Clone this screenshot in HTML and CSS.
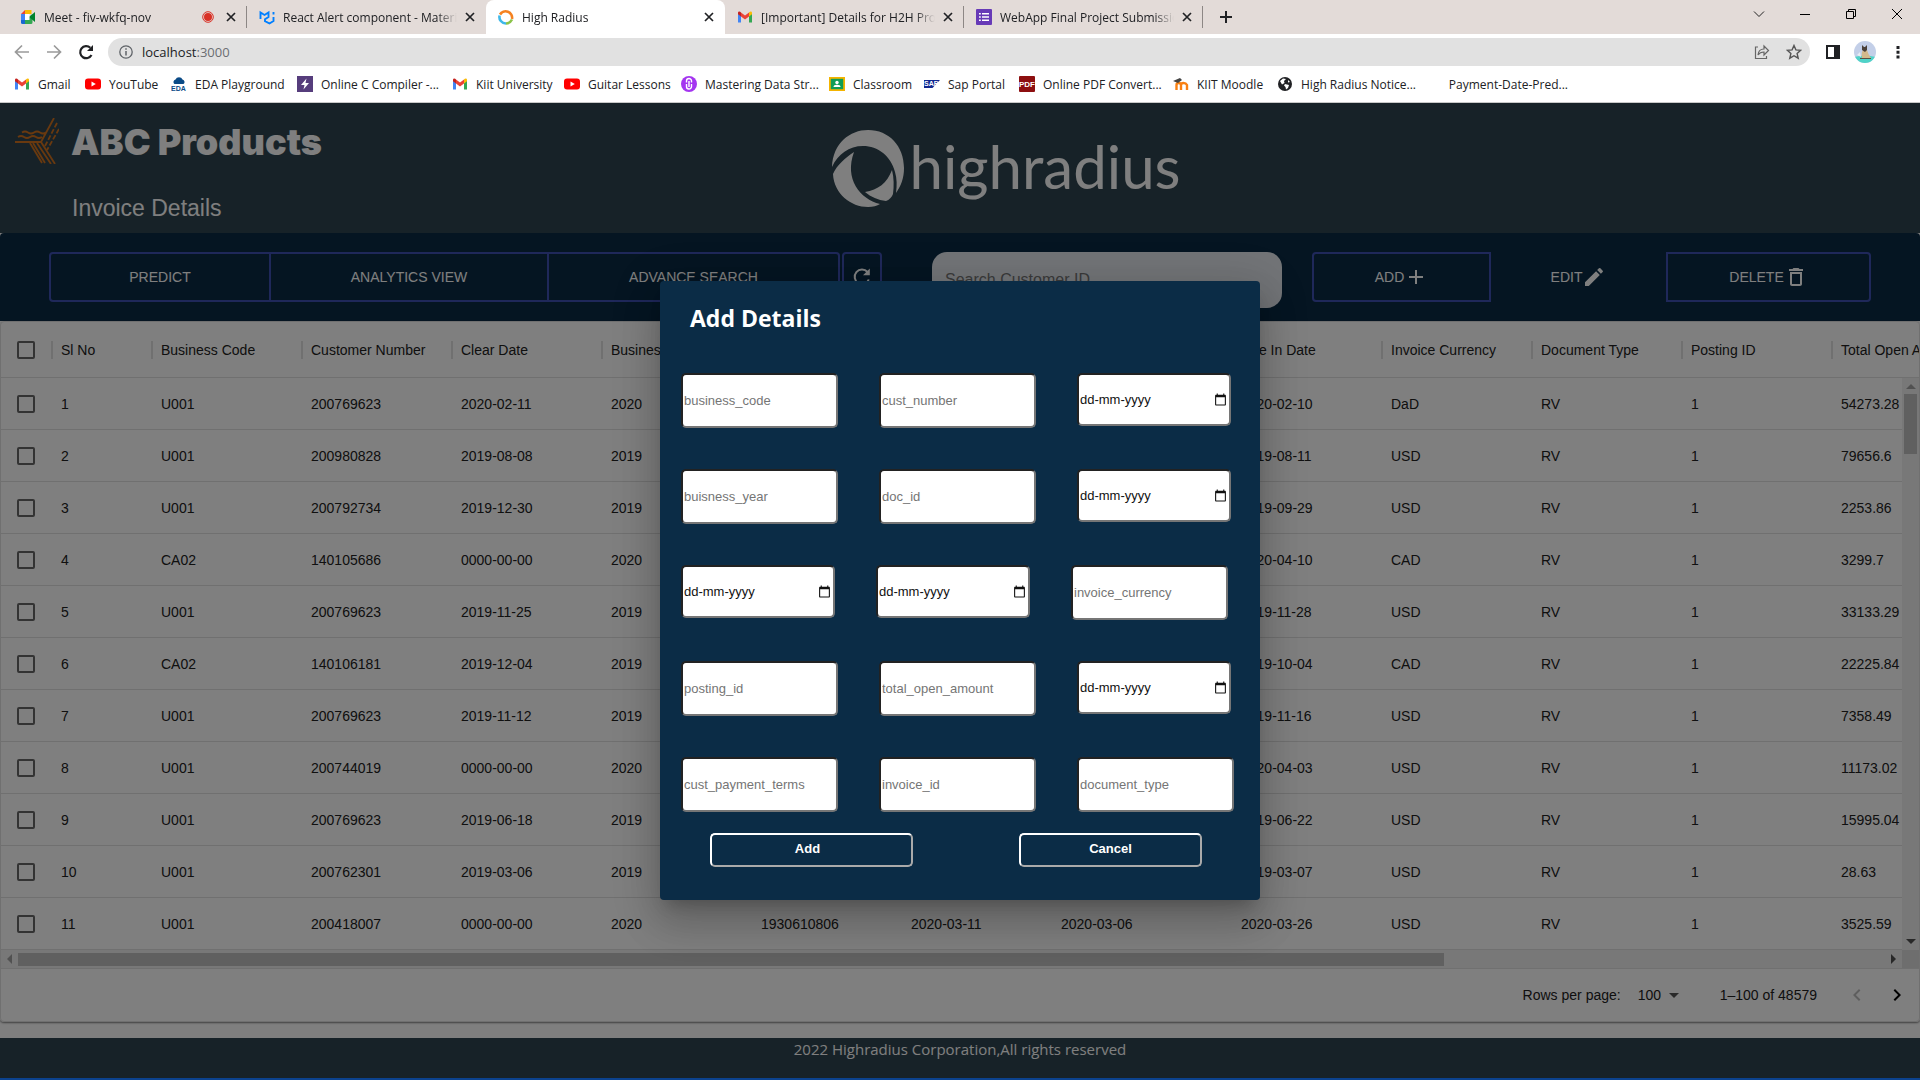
FILE: index.html
```html
<!DOCTYPE html>
<html lang="en">
<head>
<meta charset="utf-8">
<title>High Radius</title>
<link rel="stylesheet" href="styles.css">
</head>
<body>
<svg class="defs" width="0" height="0" aria-hidden="true">
  <symbol id="i-x" viewBox="0 0 10 10"><path d="M1 1l8 8M9 1l-8 8" stroke="currentColor" stroke-width="1.7" fill="none"/></symbol>
  <symbol id="i-gmail" viewBox="0 0 16 16"><path d="M1 4v9.5h3V7z" fill="#4285f4"/><path d="M15 4v9.5h-3V7z" fill="#34a853"/><path d="M4 7.500V3.500L8 6.500l4-3v4L8 10.500z" fill="#ea4335"/><path d="M1 4c0-2 2-2 3-.5v4L1 5.300z" fill="#c5221f"/><path d="M15 4c0-2-2-2-3-.5v4l3-2.200z" fill="#fbbc04"/></symbol>
  <symbol id="i-youtube" viewBox="0 0 16 16"><rect y="2.500" width="16" height="11" rx="3" fill="#f00"/><path d="M6.500 5.500v5L10.800 8z" fill="#fff"/></symbol>
  <symbol id="i-cal" viewBox="0 0 24 24"><path fill="currentColor" d="M20 3h-1V1h-2v2H7V1H5v2H4c-1.100 0-2 .9-2 2v16c0 1.100.9 2 2 2h16c1.100 0 2-.9 2-2V5c0-1.100-.9-2-2-2zm0 18H4V8h16v13z"/></symbol>
</svg>

<div class="browser">
  <div class="tabs">
    <div class="tab tab-line">
      <svg width="16" height="16" viewBox="0 0 16 16"><path d="M1 5l4-4v4z" fill="#ea4335"/><path d="M5 1h6.500v4H5z" fill="#fbbc04"/><path d="M1 5h4v6H1z" fill="#4285f4"/><path d="M1 11h4v4H2.500Q1 15 1 13.500z" fill="#1967d2"/><path d="M5 11h4V8l3.500-3v8.500q0 1.500-1.500 1.500H5z" fill="#34a853"/><path d="M9 8l6-5v10z" fill="#00832d"/><path d="M5 5h4.500v6H5z" fill="#fff"/></svg>
      <span class="tab-title">Meet - fiv-wkfq-nov</span>
      <svg class="rec" width="12" height="12" viewBox="0 0 12 12"><circle cx="6" cy="6" r="5.300" fill="none" stroke="#d93025"/><circle cx="6" cy="6" r="4" fill="#d93025"/></svg>
      <svg width="10" height="10"><use href="#i-x"/></svg>
    </div>
    <div class="tab">
      <svg width="16" height="16" viewBox="0 0 16 16"><path d="M1.500 10V3.500L5.500 6l4-2.500V8L6 10.200v2L10.500 14.500 14.500 12V8" fill="none" stroke="#007fff" stroke-width="1.900"/><path d="M14.500 3v2.500" stroke="#007fff" stroke-width="1.900"/></svg>
      <span class="tab-title">React Alert component - Material UI</span>
      <svg width="10" height="10"><use href="#i-x"/></svg>
    </div>
    <div class="tab tab-active">
      <svg width="16" height="16" viewBox="0 0 16 16" fill="none" stroke-width="2.600"><path d="M2 5.500A6.500 6.500 0 0 1 14 10" stroke="#f58220"/><path d="M1.600 6.500A6.500 6.500 0 0 0 8 14.500" stroke="#3fb8e8"/><path d="M8 14.500q4 0 6-4" stroke="#8bc34a"/></svg>
      <span class="tab-title">High Radius</span>
      <svg width="10" height="10"><use href="#i-x"/></svg>
    </div>
    <div class="tab tab-line">
      <svg width="16" height="16"><use href="#i-gmail"/></svg>
      <span class="tab-title">[Important] Details for H2H Program</span>
      <svg width="10" height="10"><use href="#i-x"/></svg>
    </div>
    <div class="tab tab-line">
      <svg width="16" height="16" viewBox="0 0 16 16"><rect width="16" height="16" rx="1" fill="#673ab7"/><path d="M3 4h1.800v1.600H3zM6 4h7v1.600H6zM3 7.200h1.800v1.600H3zM6 7.200h7v1.600H6zM3 10.400h1.800V12H3zM6 10.400h7V12H6z" fill="#fff"/></svg>
      <span class="tab-title">WebApp Final Project Submission</span>
      <svg width="10" height="10"><use href="#i-x"/></svg>
    </div>
    <button class="new-tab" aria-label="New tab"><svg width="12" height="12" viewBox="0 0 12 12"><path d="M6 0v12M0 6h12" stroke="#202124" stroke-width="2"/></svg></button>
    <div class="win-controls">
      <svg width="46" height="28" viewBox="0 0 46 28"><path d="M18 11.500l5 5 5-5" fill="none" stroke="#222"/></svg>
      <svg width="46" height="28" viewBox="0 0 46 28"><path d="M18 14.500h10" stroke="#000"/></svg>
      <svg width="46" height="28" viewBox="0 0 46 28"><path d="M18.500 11.500h7v7h-7zM20.500 11.500v-2h7v7h-2" fill="none" stroke="#000"/></svg>
      <svg width="46" height="28" viewBox="0 0 46 28"><path d="M18 9l10 10M28 9l-10 10" stroke="#000"/></svg>
    </div>
  </div>

  <div class="nav">
    <svg class="nav-icon" width="16" height="16" viewBox="0 0 16 16"><path d="M15 8H2M8 1.500L1.500 8 8 14.500" fill="none" stroke="#9a9a9a" stroke-width="1.700"/></svg>
    <svg class="nav-icon" width="16" height="16" viewBox="0 0 16 16"><path d="M1 8h13M8 1.500L14.500 8 8 14.500" fill="none" stroke="#9a9a9a" stroke-width="1.700"/></svg>
    <svg class="nav-icon" width="16" height="16" viewBox="0 0 16 16"><path d="M13.500 11A6 6 0 1 1 12.300 3.800" fill="none" stroke="#202124" stroke-width="2.200"/><path d="M15 1v6H9z" fill="#202124"/></svg>
    <div class="omnibox">
      <svg width="14" height="14" viewBox="0 0 14 14"><circle cx="7" cy="7" r="6.200" fill="none" stroke="#5f6368" stroke-width="1.300"/><path d="M7 6v4.500M7 3.200v1.600" stroke="#5f6368" stroke-width="1.500"/></svg>
      <span class="url">localhost<span class="port">:3000</span></span>
      <svg class="share" width="16" height="16" viewBox="0 0 16 16"><path d="M4 3H1.500v11.500h11V12" fill="none" stroke="#666" stroke-width="1.200"/><path d="M4 11q.5-6 6-6V2l4.500 4.500L10 11V8q-4 0-6 3z" fill="none" stroke="#666" stroke-width="1.200"/></svg>
      <svg width="16" height="16" viewBox="0 0 16 16"><path d="M8 1.500l1.900 4.400 4.800.4-3.600 3.200 1.100 4.700L8 11.700l-4.200 2.500 1.100-4.700L1.300 6.300l4.800-.4z" fill="none" stroke="#555" stroke-width="1.400"/></svg>
    </div>
    <svg class="panel" width="14" height="14" viewBox="0 0 14 14"><path d="M0 0h14v14H0zM2 2v10h6V2z" fill="#202124" fill-rule="evenodd"/></svg>
    <svg class="avatar" width="22" height="22" viewBox="0 0 22 22"><clipPath id="av"><circle cx="11" cy="11" r="11"/></clipPath><g clip-path="url(#av)"><path d="M0 0h22v22H0z" fill="#c3cfe8"/><path d="M0 16q11-3 22 0v6H0z" fill="#4fd3c8"/><path d="M8 17q-1-5 1-8h4q1 4 4 8z" fill="#d3b98c"/><path d="M8 9l0-5 2 2h1l2-2v5l-2 2z" fill="#4a4038"/><path d="M6 17h11v1H6z" fill="#5b5044"/><path d="M3 14l3-3 1 5z" fill="#e8ecf4"/></g></svg>
    <svg width="4" height="14" viewBox="0 0 4 14"><path d="M.5 1h3v3h-3zM.5 5.700h3v3h-3zM.5 10.400h3v3h-3z" fill="#202124"/></svg>
  </div>

  <div class="bookmarks">
    <a href="#"><svg width="16" height="16"><use href="#i-gmail"/></svg>Gmail</a>
    <a href="#"><svg width="16" height="16"><use href="#i-youtube"/></svg>YouTube</a>
    <a href="#"><svg width="16" height="16" viewBox="0 0 16 16"><path d="M3.500 8a2.500 2.500 0 0 1 1-4.500A3.800 3.800 0 0 1 11.500 3.500a2.500 2.500 0 0 1 1 4.500z" fill="#0a4a86"/><text x="0" y="15" class="fav-eda">EDA</text></svg>EDA Playground</a>
    <a href="#"><svg width="16" height="16" viewBox="0 0 16 16"><path d="M0 0h16v16H0z" fill="#563d7c"/><path d="M9.500 2.500L4 9h3.500l-1 4.500L12 7H8.500z" fill="#fff"/></svg>Online C Compiler -...</a>
    <a href="#"><svg width="16" height="16"><use href="#i-gmail"/></svg>Kiit University</a>
    <a href="#"><svg width="16" height="16"><use href="#i-youtube"/></svg>Guitar Lessons</a>
    <a href="#"><svg width="16" height="16" viewBox="0 0 16 16"><circle cx="8" cy="8" r="8" fill="#a435f0"/><path d="M5.500 8v2.500a2.500 2.500 0 0 0 5 0V8M5.500 6.500V5a2.500 2.500 0 0 1 5 0v1.500M8 5v6" fill="none" stroke="#fff" stroke-width="1.400"/></svg>Mastering Data Str...</a>
    <a href="#"><svg width="16" height="16" viewBox="0 0 16 16"><path d="M0 1h16v14H0z" fill="#f4b400"/><path d="M1.800 2.800h12.400v10.400H1.800z" fill="#0f9d58"/><circle cx="8" cy="6.500" r="1.700" fill="#fff"/><path d="M4.500 11q0-2.300 3.500-2.300t3.500 2.300z" fill="#fff"/></svg>Classroom</a>
    <a href="#"><svg width="16" height="16" viewBox="0 0 16 16"><path d="M0 4h16l-7.500 8H0z" fill="#10278f"/><text x="0" y="10" class="fav-sap">SAP</text></svg>Sap Portal</a>
    <a href="#"><svg width="16" height="16" viewBox="0 0 16 16"><rect width="16" height="16" rx="1" fill="#8d0f10"/><text x="0" y="11" class="fav-pdf">PDF</text></svg>Online PDF Convert...</a>
    <a href="#"><svg width="16" height="16" viewBox="0 0 16 16"><path d="M3.500 14V9q0-2 2.200-2T8 9v5M8 9q0-2 2.500-2T14 9v5" fill="none" stroke="#f98012" stroke-width="2.400"/><path d="M0 5l7-3 2 2-4 3z" fill="#444"/></svg>KIIT Moodle</a>
    <a href="#"><svg width="16" height="16" viewBox="0 0 16 16"><circle cx="8" cy="8" r="7" fill="#202124"/><path d="M3 5l3-2.500 3 .5-2 2 .5 2L5 8.500zM8 8l4 1-1 3-2 1.500-.5-2.500L7 9.500zM11 4l2 2-2 .5z" fill="#fff"/></svg>High Radius Notice...</a>
    <a href="#"><span class="no-icon"></span>Payment-Date-Pred...</a>
  </div>
</div>

<div class="app">
  <header class="header">
    <div class="brand">
      <div class="company">
        <svg width="44" height="46" viewBox="0 0 44 46" fill="none" stroke="#d2721e" stroke-width="1.800"><path d="M39 0L26 24M0 24h26l14 22M7 14.500q3-2 6 0t6 0 6 0 6 0M3 19q3-2 6 0t6 0 6 0 6 0M18 25l12 20M15 25l12 20M22 25l14 21"/><path d="M42 5L30 28M44 11L32 32" stroke-dasharray="5 2"/></svg>
        <h1>ABC Products</h1>
      </div>
      <h2>Invoice Details</h2>
    </div>
    <div class="hr-logo">
      <svg width="73" height="79" viewBox="0 0 73 79" fill="#fff"><path d="M0 38C1 14 18 1 36 1c21 0 36 16 36 38 0 10-3 18-8 25 1-8 1-14-1-21C59 27 46 17 31 17 17 17 6 25 0 38z"/><path d="M22 23C13 29 5 36 1 45c1 20 18 33 35 33 5 0 9-1 12-3C28 70 12 50 22 23z"/><path d="M60 41c2 8 2 16 1 24-1 3-4 6-7 7-8-1-15-4-21-9 13-2 22-9 27-22z"/></svg>
      <span>highradius</span>
    </div>
  </header>

  <section class="toolbar">
    <div class="group group-views">
      <button>PREDICT</button>
      <button>ANALYTICS VIEW</button>
      <button>ADVANCE SEARCH</button>
    </div>
    <button class="refresh" aria-label="Refresh"><svg width="20" height="20" viewBox="0 0 20 20"><path d="M16.800 12.500A7.300 7.300 0 1 1 15.500 5" fill="none" stroke="currentColor" stroke-width="2"/><path d="M17.800 1.500v6.800H11z" fill="currentColor"/></svg></button>
    <input class="search" type="text" placeholder="Search Customer ID" aria-label="Search Customer ID">
    <div class="group group-actions">
      <button>ADD<svg width="24" height="24" viewBox="0 0 24 24"><path fill="currentColor" d="M19 13h-6v6h-2v-6H5v-2h6V5h2v6h6v2z"/></svg></button>
      <button class="plain">EDIT<svg width="24" height="24" viewBox="0 0 24 24"><path fill="currentColor" d="M3 17.250V21h3.750L17.810 9.940l-3.750-3.750L3 17.250zM20.710 7.040c.39-.39.39-1.020 0-1.410l-2.340-2.340a.9959.9959 0 0 0-1.410 0l-1.830 1.830 3.750 3.750 1.830-1.830z"/></svg></button>
      <button>DELETE<svg width="24" height="24" viewBox="0 0 24 24"><path fill="currentColor" d="M6 19c0 1.100.9 2 2 2h8c1.100 0 2-.9 2-2V7H6v12zM8 9h8v10H8V9zm7.500-5l-1-1h-5l-1 1H5v2h14V4h-3.500z"/></svg></button>
    </div>
  </section>

  <section class="grid-card">
    <div class="grid-body">
      <table>
        <colgroup><col class="c-check"><col class="c-no"><col><col><col><col><col><col><col class="c-wide"><col><col><col><col><col></colgroup>
        <thead>
          <tr><th><input type="checkbox" aria-label="Select all"></th><th>Sl No</th><th>Business Code</th><th>Customer Number</th><th>Clear Date</th><th>Business Year</th><th>Document ID</th><th>Posting Date</th><th>Baseline Date</th><th>Due In Date</th><th>Invoice Currency</th><th>Document Type</th><th>Posting ID</th><th>Total Open Amount</th></tr>
        </thead>
        <tbody>
          <tr><td><input type="checkbox" aria-label="Row 1"></td><td>1</td><td>U001</td><td>200769623</td><td>2020-02-11</td><td>2020</td><td></td><td></td><td></td><td>2020-02-10</td><td>DaD</td><td>RV</td><td>1</td><td>54273.28</td></tr>
          <tr><td><input type="checkbox" aria-label="Row 2"></td><td>2</td><td>U001</td><td>200980828</td><td>2019-08-08</td><td>2019</td><td></td><td></td><td></td><td>2019-08-11</td><td>USD</td><td>RV</td><td>1</td><td>79656.6</td></tr>
          <tr><td><input type="checkbox" aria-label="Row 3"></td><td>3</td><td>U001</td><td>200792734</td><td>2019-12-30</td><td>2019</td><td></td><td></td><td></td><td>2019-09-29</td><td>USD</td><td>RV</td><td>1</td><td>2253.86</td></tr>
          <tr><td><input type="checkbox" aria-label="Row 4"></td><td>4</td><td>CA02</td><td>140105686</td><td>0000-00-00</td><td>2020</td><td></td><td></td><td></td><td>2020-04-10</td><td>CAD</td><td>RV</td><td>1</td><td>3299.7</td></tr>
          <tr><td><input type="checkbox" aria-label="Row 5"></td><td>5</td><td>U001</td><td>200769623</td><td>2019-11-25</td><td>2019</td><td></td><td></td><td></td><td>2019-11-28</td><td>USD</td><td>RV</td><td>1</td><td>33133.29</td></tr>
          <tr><td><input type="checkbox" aria-label="Row 6"></td><td>6</td><td>CA02</td><td>140106181</td><td>2019-12-04</td><td>2019</td><td></td><td></td><td></td><td>2019-10-04</td><td>CAD</td><td>RV</td><td>1</td><td>22225.84</td></tr>
          <tr><td><input type="checkbox" aria-label="Row 7"></td><td>7</td><td>U001</td><td>200769623</td><td>2019-11-12</td><td>2019</td><td></td><td></td><td></td><td>2019-11-16</td><td>USD</td><td>RV</td><td>1</td><td>7358.49</td></tr>
          <tr><td><input type="checkbox" aria-label="Row 8"></td><td>8</td><td>U001</td><td>200744019</td><td>0000-00-00</td><td>2020</td><td></td><td></td><td></td><td>2020-04-03</td><td>USD</td><td>RV</td><td>1</td><td>11173.02</td></tr>
          <tr><td><input type="checkbox" aria-label="Row 9"></td><td>9</td><td>U001</td><td>200769623</td><td>2019-06-18</td><td>2019</td><td></td><td></td><td></td><td>2019-06-22</td><td>USD</td><td>RV</td><td>1</td><td>15995.04</td></tr>
          <tr><td><input type="checkbox" aria-label="Row 10"></td><td>10</td><td>U001</td><td>200762301</td><td>2019-03-06</td><td>2019</td><td></td><td></td><td></td><td>2019-03-07</td><td>USD</td><td>RV</td><td>1</td><td>28.63</td></tr>
          <tr><td><input type="checkbox" aria-label="Row 11"></td><td>11</td><td>U001</td><td>200418007</td><td>0000-00-00</td><td>2020</td><td>1930610806</td><td>2020-03-11</td><td>2020-03-06</td><td>2020-03-26</td><td>USD</td><td>RV</td><td>1</td><td>3525.59</td></tr>
        </tbody>
      </table>
      <div class="vscroll"><span class="arrow up"></span><span class="vthumb"></span><span class="arrow down"></span></div>
    </div>
    <div class="hscroll"><span class="arrow left"></span><span class="htrack"><span class="hthumb"></span></span><span class="arrow right"></span><span class="corner"></span></div>
    <div class="pager">
      <label for="rows">Rows per page:</label>
      <span class="select-wrap"><select id="rows"><option>100</option></select><svg width="24" height="24" viewBox="0 0 24 24"><path d="M7 10l5 5 5-5z" fill="#555"/></svg></span>
      <span class="range">1–100 of 48579</span>
      <button disabled aria-label="Previous page"><svg width="24" height="24" viewBox="0 0 24 24"><path fill="currentColor" d="M15.410 7.410L14 6l-6 6 6 6 1.410-1.410L10.830 12z"/></svg></button>
      <button aria-label="Next page"><svg width="24" height="24" viewBox="0 0 24 24"><path fill="currentColor" d="M10 6L8.590 7.410 13.170 12l-4.580 4.590L10 18l6-6z"/></svg></button>
    </div>
  </section>

  <footer class="footer">2022 Highradius Corporation,All rights reserved</footer>

  <div class="backdrop">
    <form class="dialog" role="dialog" aria-labelledby="dlg-title">
      <h3 id="dlg-title">Add Details</h3>
      <div class="fields">
        <div class="field-row">
          <input class="box" placeholder="business_code" aria-label="business_code">
          <input class="box" placeholder="cust_number" aria-label="cust_number">
          <span class="date"><input placeholder="dd-mm-yyyy" aria-label="clear_date"><svg width="13" height="13"><use href="#i-cal"/></svg></span>
        </div>
        <div class="field-row">
          <input class="box" placeholder="buisness_year" aria-label="buisness_year">
          <input class="box" placeholder="doc_id" aria-label="doc_id">
          <span class="date"><input placeholder="dd-mm-yyyy" aria-label="posting_date"><svg width="13" height="13"><use href="#i-cal"/></svg></span>
        </div>
        <div class="field-row">
          <span class="date"><input placeholder="dd-mm-yyyy" aria-label="document_create_date"><svg width="13" height="13"><use href="#i-cal"/></svg></span>
          <span class="date"><input placeholder="dd-mm-yyyy" aria-label="due_in_date"><svg width="13" height="13"><use href="#i-cal"/></svg></span>
          <input class="box" placeholder="invoice_currency" aria-label="invoice_currency">
        </div>
        <div class="field-row">
          <input class="box" placeholder="posting_id" aria-label="posting_id">
          <input class="box" placeholder="total_open_amount" aria-label="total_open_amount">
          <span class="date"><input placeholder="dd-mm-yyyy" aria-label="baseline_create_date"><svg width="13" height="13"><use href="#i-cal"/></svg></span>
        </div>
        <div class="field-row">
          <input class="box" placeholder="cust_payment_terms" aria-label="cust_payment_terms">
          <input class="box" placeholder="invoice_id" aria-label="invoice_id">
          <input class="box" placeholder="document_type" aria-label="document_type">
        </div>
      </div>
      <div class="dialog-actions">
        <button type="button" class="btn-add">Add</button>
        <button type="button" class="btn-cancel">Cancel</button>
      </div>
    </form>
  </div>
</div>
<div class="taskbar-edge"></div>
</body>
</html>
```
FILE: styles.css
```css
* { box-sizing: border-box; }

body {
  margin: 0;
  min-height: 100vh;
  display: flex;
  flex-direction: column;
  font-family: "Liberation Sans", Arial, sans-serif;
  font-size: 14px;
  background: #fff;
  overflow: hidden;
}

button, input, select { font: inherit; }
svg { flex: none; display: block; }
.defs { position: absolute; }

/* ---------- browser window ---------- */
.browser {
  font-family: "Segoe UI", "Open Sans", sans-serif;
  font-size: 12px;
  color: #202124;
  border-bottom: 1px solid #c8c8c8;
}

.tabs {
  display: flex;
  height: 34px;
  padding-left: 8px;
  background: #e3dbd8;
}
.tab {
  flex: 0 1 239px;
  min-width: 0;
  display: flex;
  align-items: center;
  padding: 0 10px 0 12px;
  border-right: 1px solid transparent;
}
.tab-title {
  flex: 1;
  min-width: 0;
  margin: 0 8px;
  overflow: hidden;
  white-space: nowrap;
  -webkit-mask-image: linear-gradient(to right, #000 calc(100% - 20px), transparent);
  mask-image: linear-gradient(to right, #000 calc(100% - 20px), transparent);
}
.tab-line {
  border-image: linear-gradient(transparent 20%, #8d8785 20%, #8d8785 80%, transparent 80%) 1;
}
.tab-active {
  background: #fff;
  border-radius: 8px 8px 0 0;
}
.rec { margin-right: 12px; }
.new-tab {
  margin-left: 17px;
  padding: 0;
  border: 0;
  background: none;
}
.win-controls { display: flex; margin-left: auto; }

.nav {
  display: flex;
  align-items: center;
  height: 36px;
  padding: 0 20px 0 14px;
}
.nav-icon { margin-right: 16px; }
.omnibox {
  flex: 1;
  display: flex;
  align-items: center;
  gap: 9px;
  height: 28px;
  margin: 0 16px 0 -2px;
  padding: 0 8px 0 11px;
  border-radius: 14px;
  background: #e1e1e1;
}
.url { font-size: 13px; }
.port { color: #6b6e72; }
.share { margin-left: auto; margin-right: 7px; }
.avatar { margin: 0 20px 0 14px; }

.bookmarks {
  display: grid;
  grid-template-columns: 71px 86px 126px 155px 112px 117px 148px 95px 95px 154px 104px 151px 140px;
  align-items: center;
  height: 32px;
  padding: 0 14px 4px;
}
.bookmarks a {
  display: flex;
  align-items: center;
  gap: 8px;
  color: inherit;
  text-decoration: none;
  white-space: nowrap;
}
.no-icon { width: 16px; }
.fav-eda { font: 700 7px "Liberation Sans", sans-serif; fill: #0a4a86; }
.fav-sap { font: 700 7px "Liberation Sans", sans-serif; fill: #fff; }
.fav-pdf { font: 700 8px "Liberation Sans", sans-serif; fill: #fff; }

/* ---------- application ---------- */
.app {
  position: relative;
  flex: 1;
  display: flex;
  flex-direction: column;
}

.header {
  display: grid;
  grid-template-columns: 1fr auto 1fr;
  height: 130px;
  padding: 15px 15px 0;
  background: #2f4550;
  color: #fff;
}
.company { display: flex; gap: 12px; }
.header h1 {
  margin: 0;
  font: 900 36px/48px Inter, sans-serif;
}
.header h2 {
  margin: 28px 0 0 57px;
  font-size: 23px;
  font-weight: 400;
  line-height: 28px;
}
.hr-logo {
  display: flex;
  gap: 4px;
  padding-top: 11px;
  padding-left: 93px;
  font: 400 60px/74px Lato, sans-serif;
}

.toolbar {
  display: flex;
  align-items: flex-start;
  height: 88px;
  padding: 19px 49px 0;
  border-radius: 4px 4px 0 0;
  background: #0b2b45;
}
.toolbar button {
  display: flex;
  align-items: center;
  justify-content: center;
  height: 50px;
  padding: 0;
  border: 2px solid #3f51b5;
  background: none;
  color: #fff;
}
.group { display: grid; }
.group-views { flex: 791 1 0; grid-template-columns: 222fr 278fr 291fr; }
.group-views button + button { border-left: 0; }
.group button:first-child { border-radius: 4px 0 0 4px; }
.group button:last-child { border-radius: 0 4px 4px 0; }
.toolbar .refresh {
  width: 40px;
  margin: 0 50px 0 2px;
  border-radius: 4px;
}
.search {
  flex: 350 1 0;
  min-width: 0;
  height: 56px;
  margin-right: 30px;
  padding: 0;
  border: 0;
  border-radius: 15px;
  background: #e4e8ee;
  font-size: 16px;
  text-indent: 13px;
}
.search::placeholder { color: #757575; }
.group-actions { flex: 559 1 0; grid-template-columns: 179fr 175fr 205fr; }
.toolbar .plain { border-color: transparent; }

.grid-card {
  margin-bottom: 16px;
  border: 1px solid #e0e0e0;
  border-radius: 4px;
  box-shadow: 0 1px 2px rgba(0, 0, 0, .5);
  color: #212121;
}
.grid-body { position: relative; overflow: hidden; }
table {
  width: 1980px;
  table-layout: fixed;
  border-collapse: separate;
  border-spacing: 0;
}
col { width: 150px; }
.c-check { width: 50px; }
.c-no { width: 100px; }
.c-wide { width: 180px; }
th, td {
  height: 52px;
  padding: 0 10px;
  border-bottom: 1px solid #e0e0e0;
  font-weight: 400;
  text-align: left;
  white-space: nowrap;
}
th {
  height: 56px;
  background: linear-gradient(#e0e0e0, #e0e0e0) left center / 2px 18px no-repeat;
}
th:first-child { background: none; }
th:first-child, td:first-child { padding: 0 16px; }
input[type="checkbox"] {
  appearance: none;
  display: block;
  width: 18px;
  height: 18px;
  margin: 0;
  border: 2px solid #666;
  border-radius: 2px;
}

/* scroll bar lies over the rows, below the header */
.vscroll {
  position: absolute;
  top: 56px;
  right: 0;
  bottom: 0;
  width: 17px;
  display: flex;
  flex-direction: column;
  align-items: center;
  padding: 6px 0;
  background: #f1f1f1;
}
.vthumb { width: 13px; height: 60px; margin-top: 5px; background: #c1c1c1; }
.arrow { border: 5px solid transparent; }
.up { border-top: 0; border-bottom-color: #a3a3a3; }
.down { margin-top: auto; border-bottom: 0; border-top-color: #505050; }
.left { border-left: 0; border-right-color: #a3a3a3; }
.right { border-right: 0; border-left-color: #505050; }
.hscroll {
  display: flex;
  align-items: center;
  height: 19px;
  padding-left: 6px;
  border-bottom: 1px solid #e0e0e0;
  background: #f1f1f1;
}
.htrack { flex: 1; margin: 0 6px; }
.hthumb { display: block; width: 76.4%; height: 13px; background: #c1c1c1; }
.corner { width: 17px; height: 18px; margin-left: 6px; background: #dcdcdc; }

.pager {
  display: flex;
  align-items: center;
  justify-content: flex-end;
  height: 52px;
  padding-right: 10px;
}
.select-wrap { display: flex; align-items: center; margin: 0 34px 0 17px; }
.select-wrap select {
  appearance: none;
  padding: 0;
  border: 0;
  background: none;
  color: inherit;
}
.range { margin-right: 28px; }
.pager button { padding: 0; border: 0; background: none; color: #000; }
.pager button:disabled { margin-right: 16px; color: #bdbdbd; }

.footer {
  flex: 1;
  min-height: 40px;
  background: #2f4550;
  color: #fff;
  font: 15px/22px "Segoe UI", "Open Sans", sans-serif;
  text-align: center;
}
.taskbar-edge { height: 2px; background: #0b428e; }

/* ---------- dialog ---------- */
.backdrop {
  position: absolute;
  inset: 0;
  display: flex;
  align-items: center;
  justify-content: center;
  background: rgba(0, 0, 0, .5);
}
.dialog {
  width: 600px;
  padding: 20px 21px 33px;
  border-radius: 4px;
  background: #0b2c46;
  color: #fff;
  box-shadow: 0 11px 15px -7px rgba(0, 0, 0, .2), 0 24px 38px 3px rgba(0, 0, 0, .14), 0 9px 46px 8px rgba(0, 0, 0, .12);
}
.dialog h3 {
  margin: 0 0 38px 9px;
  font: 700 23px/34px "Segoe UI", "Open Sans", sans-serif;
}
.fields { display: grid; gap: 41px; font-size: 13px; }
.field-row { display: flex; align-items: flex-start; gap: 41px; height: 55px; }
.box, .date {
  border: 2px solid;
  border-color: #222 #767676 #767676 #222;
  border-radius: 5px;
  background: #fff;
}
.box { width: 157px; height: 55px; padding: 0 1px; }
.box::placeholder { color: #757575; }
.date {
  display: flex;
  align-items: center;
  width: 154px;
  height: 53px;
  padding: 0 2px 0 1px;
  color: #111;
}
.date input { flex: 1; min-width: 0; padding: 0; border: 0; background: none; }
.date input::placeholder { color: #111; }
.dialog-actions {
  display: flex;
  gap: 106px;
  margin: 21px 0 0 29px;
}
.dialog-actions button {
  height: 34px;
  padding: 0 0 4px;
  border: 2px solid;
  border-color: #fff #aaa #aaa #fff;
  border-radius: 5px;
  background: none;
  color: #fff;
  font-size: 13px;
  font-weight: 700;
}
.dialog-actions .btn-add { width: 203px; padding-right: 8px; }
.btn-cancel { width: 183px; }
```
